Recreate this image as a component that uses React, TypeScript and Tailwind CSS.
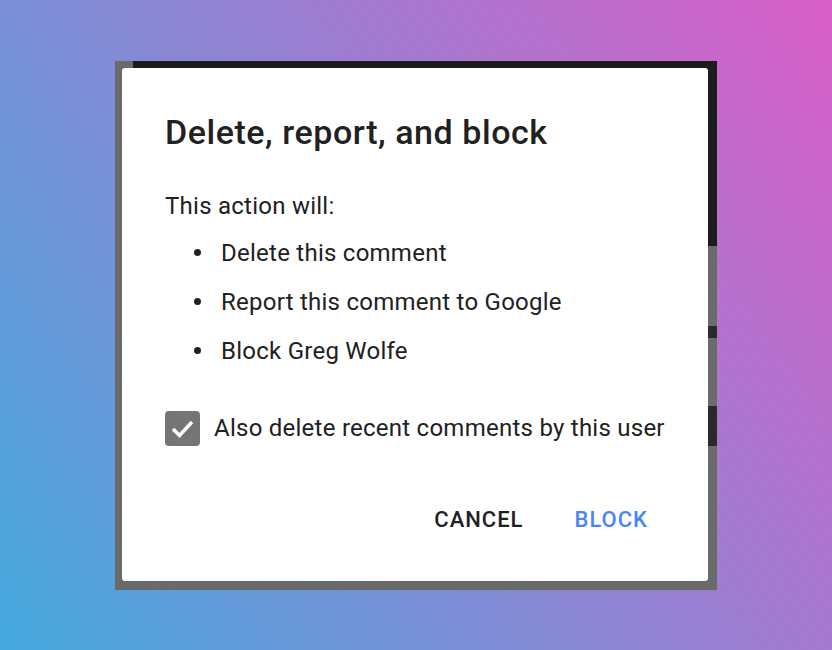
import React from "react";

export default function App() {
  const items = ["Delete this comment", "Report this comment to Google", "Block Greg Wolfe"];
  return (
    <div
      className="w-[832px] h-[650px] flex items-center justify-center bg-[linear-gradient(55deg,#44aade,#da5ec8)]"
      style={{ fontFamily: "Roboto, 'Noto Sans', sans-serif" }}
    >
      <div className="relative w-[602px] h-[529px] bg-[#6a6a6a] pt-[7px] pl-[7px]">
        <div className="absolute top-0 left-[18px] right-0 h-[8px] bg-[#1c1c1c]" />
        <div className="absolute top-0 right-0 w-[10px] h-[185px] bg-[#1c1c1c]" />
        <div className="absolute top-[265px] right-0 w-[10px] h-[12px] bg-[#2a2a2a]" />
        <div className="absolute top-[345px] right-0 w-[10px] h-[40px] bg-[#2a2a2a]" />
        <div className="relative w-[586px] h-[513px] bg-white rounded-[3px] pl-[43px] pt-[44px] text-[#212121]">
          <div className="text-[34px] leading-[40px] font-medium tracking-[0.55px]">Delete, report, and block</div>
          <div className="mt-[39px] text-[24px] leading-[30px] tracking-[0.25px]">This action will:</div>
          <ul className="mt-[8px]">
            {items.map((t) => (
              <li key={t} className="mt-[15px] flex items-center h-[34px] text-[24px] leading-[30px] tracking-[0.25px]">
                <span className="ml-[29px] w-[7px] h-[7px] rounded-full bg-[#212121]" />
                <span className="ml-[20px]">{t}</span>
              </li>
            ))}
          </ul>
          <div className="mt-[43px] flex items-center">
            <div className="w-[35px] h-[35px] rounded-[4px] bg-[#757575] flex items-center justify-center">
              <svg width="35" height="35" viewBox="0 0 35 35">
                <polyline points="8,18 14.5,24.5 27,11" fill="none" stroke="white" strokeWidth="3.5" />
              </svg>
            </div>
            <span className="ml-[14px] text-[24px] leading-[30px] tracking-[0.25px]">Also delete recent comments by this user</span>
          </div>
          <div className="mt-[59px] flex justify-end pr-[60px] text-[22px] leading-[30px] font-medium tracking-[1px]">
            <span>CANCEL</span>
            <span className="ml-[51px] text-[#4a86f0]">BLOCK</span>
          </div>
        </div>
      </div>
    </div>
  );
}
